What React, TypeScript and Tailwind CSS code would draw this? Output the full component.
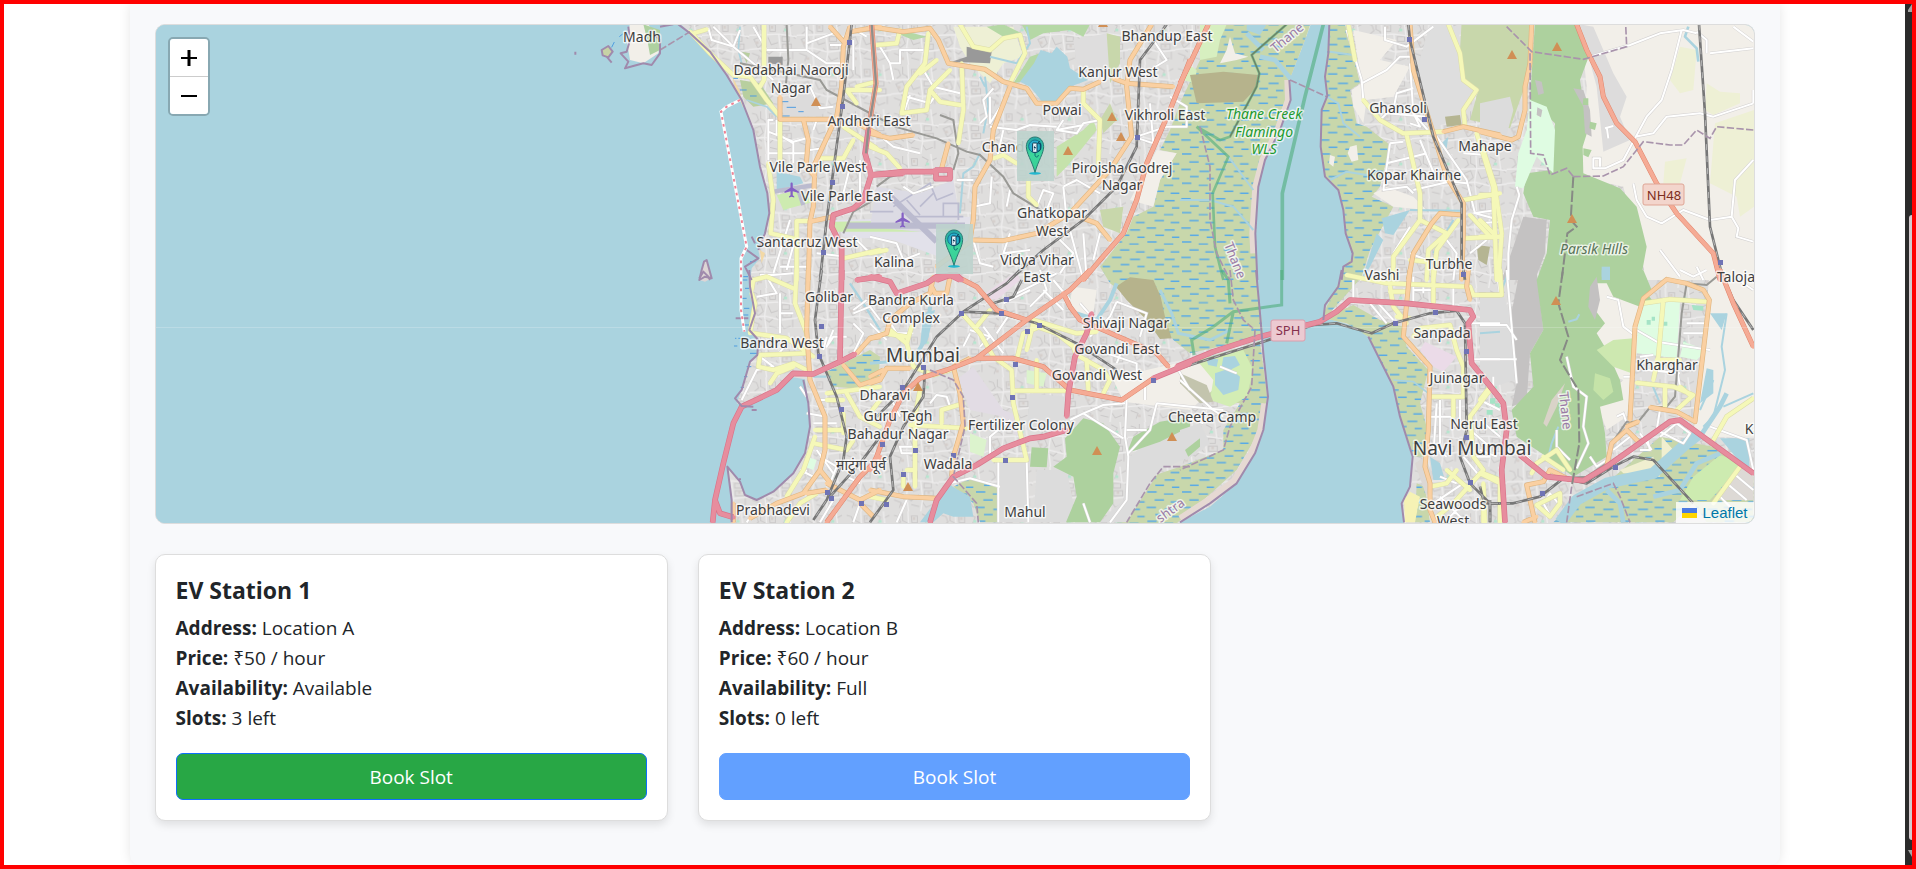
import React from "react";

/* ---------- Map data ----------
   Geometry is stored per sheet, in sheet units (3 units = 1 map pixel). */

type Sheet = "A" | "B" | "C" | "D" | "E" | "F" | "G" | "H";

const ORIGIN: Record<Sheet, [number, number]> = {
  A: [560, 20],
  B: [870, 20],
  C: [1180, 20],
  D: [1480, 20],
  E: [560, 270],
  F: [870, 270],
  G: [1180, 270],
  H: [1480, 270],
};

const place = (s: Sheet) => `translate(${ORIGIN[s][0]} ${ORIGIN[s][1]}) scale(0.33333)`;

const WEST_LAND =
  "M355 5L390 40L450 95L500 165L545 240L580 330L600 440L622 520L628 580L615 640L595 690L600 715L575 745L570 800L582 850L585 900L568 930L595 960L592 1005L570 1025L545 1110L530 1150L545 1158L580 1150L640 1110L690 1070L735 1078L745 1150L750 1220L735 1300L700 1360L640 1415L590 1440L555 1425L540 1385L502 1340L515 1450L512 1520H1850L1860 1507L1950 1460L2030 1390L2085 1300L2112 1230L2122 1130L2110 1000L2100 880L2090 780L2088 640L2095 500L2115 420L2160 330L2190 240L2188 180L2235 60L2255 5Z";
const EAST_LAND =
  "M2310 5L2305 100L2295 170L2302 228L2285 270L2282 380L2295 470L2335 510L2350 570L2357 640L2378 700L2375 725L2350 740L2335 800L2295 865L2290 900L2320 900L2370 915L2425 950L2460 1020L2500 1100L2520 1190L2555 1310L2550 1400L2525 1450L2532 1520H3600V5Z";

const WETLANDS: [Sheet, string][] = [
  ["C", "M90 0L60 120L0 250L-30 330L-60 390L-10 400L-60 480L-80 560L-140 590L-160 640L-240 740L-210 790L-60 900L-20 960L30 1000L250 950L232 780L228 640L235 500L255 420L300 330L330 240L328 180L375 60L395 0Z"],
  ["G", "M40 275L240 215L262 380L240 480L170 600L60 700L-10 760H-190L-90 620L0 590L130 540L130 480L180 400L90 390L20 310Z"],
  ["C", "M450 0H490L510 60L540 190L510 210L530 310L560 320L630 375L600 500L575 530L640 560L570 690L545 770L520 800L430 900L435 870L485 770L490 740L518 712L497 640L490 570L475 510L435 470L422 380L425 270L442 228L435 170Z"],
  ["G", "M430 145L520 105L600 150L670 170L680 230L745 300L720 400L740 470L735 560L700 560L660 440L640 350L600 270L565 200L500 160Z"],
  ["H", "M380 640L540 500L700 530L820 620V757H220L290 690Z"],
  ["E", "M800 305L850 280L930 240L960 260L955 330L880 355L820 350Z"],
  ["F", "M250 650L300 625L385 655V757H330L310 700Z"],
  ["G", "M710 640L735 650L750 757H705Z"],
];

const AREAS: [Sheet, string, string][] = [
  // open ground
  ["D", "#f2efe9", "M300 5H830V780H500L430 500L300 470L320 200Z"],
  ["H", "#f2efe9", "M330 0H500L470 250L440 440L380 480L350 400L430 330L350 300Z"],
  ["H", "#f2efe9", "M690 0H830V500L640 500Z"],
  ["C", "#f2efe9", "M520 30L650 60L600 120L690 140L640 230L560 240L550 310L520 260L515 210L545 190Z"],
  ["C", "#f2efe9", "M580 520L620 500L700 530L740 570L640 560Z"],
  ["B", "#f2efe9", "M780 540L860 390L920 400L870 480L850 560Z"],
  ["F", "#f2efe9", "M730 330L830 300L960 270L1050 290L1040 350L960 420L760 395Z"],
  ["F", "#f2efe9", "M610 50L680 60L670 130L620 140L600 90Z"],
  ["B", "#eef0d5", "M250 20H430L460 110L400 130L360 190L300 130L270 80Z"],
  ["A", "#f2efe9", "M210 10L262 10L300 60L295 100L250 130L210 120L200 60Z"],
  ["A", "#aed1a0", "M250 13L300 30V90L270 105L262 60Z"],
  // fields
  ["D", "#eef0d5", "M600 80L650 90L640 210L600 220L570 180Z"],
  ["D", "#eef0d5", "M680 190L720 215L780 220V250L700 285L675 270Z"],
  ["D", "#eef0d5", "M705 310L822 270V560L780 590L770 530L690 490Z"],
  ["D", "#eef0d5", "M555 425L620 415L600 490H550Z"],
  // built-up and industrial ground
  ["C", "#dedede", "M750 13L835 20L850 160L890 210L840 300L760 320L710 150Z"],
  ["D", "#dddcdc", "M300 13L340 20L400 160L440 230L420 290L450 360L370 395L350 200Z"],
  ["F", "#dcdcdc", "M480 370L590 380L580 470L470 480ZM390 570H470V757H390ZM500 600L590 600L610 700L590 757H490Z"],
  ["F", "#dcdcdc", "M780 560L850 500L960 470V560L870 600L770 757H690L760 690Z"],
  ["B", "#dedddd", "M610 60L710 40L720 120L660 160L620 130Z"],
  ["A", "#dcdbdb", "M670 230L740 215L800 270L780 290H670Z"],
  ["H", "#dcdcdc", "M0 75H70L110 190L105 330L40 350L0 300Z"],
  ["F", "#e2dce4", "M265 325L310 290L400 420L450 440L440 500L400 440L300 420Z"],
  ["F", "#e9dae6", "M330 80L440 5L450 30L380 90Z"],
  ["G", "#ebdbe8", "M735 215L830 260L790 305L760 290L720 240Z"],
  ["D", "#c4c2c2", "M100 680L130 590L200 600L195 700L165 780H65Z"],
  ["H", "#c4c2c2", "M120 0H170L190 180L150 250L140 390L95 410L110 340L90 150Z"],
  // hills and woods
  ["C", "#c8d7ab", "M845 5H1060L1050 160L1020 240L990 325L870 300L895 210L850 175L840 90Z"],
  ["D", "#dcdcdc", "M0 250L90 230L100 270L80 345L0 330Z"],
  ["D", "#add19e", "M165 5H290L330 100L300 180L312 260L330 310L308 380L310 460L420 505L470 560L500 680L480 790L530 860H480L400 830L380 790L350 790L330 850L375 910L350 940L380 990L420 1080L430 1140L360 1160L375 1240L380 1310L280 1370L200 1310L110 1250L95 1170L160 1100L150 1000L190 930L170 780L200 700L210 600L160 590L130 520L140 460L215 450L225 310L150 240Z"],
  ["D", "#dffce2", "M150 240L200 260L225 330L220 460L170 410L130 505L105 500L115 400L140 330Z"],
  ["D", "#c4c2c2", "M165 180L185 185L192 220L175 225ZM172 262L187 270L183 292L170 285ZM280 205L310 210L330 270L335 350L315 340L310 260Z"],
  ["D", "#add19e", "M310 235H325V255H308ZM330 305L350 310L345 330L328 325ZM310 385L335 390L325 412L310 405Z"],
  ["H", "#add19e", "M380 0H490L515 60L480 90L420 85L395 50Z"],
  ["H", "#c3c1c1", "M330 50L350 20L360 90L345 150L325 110Z"],
  ["H", "#c5e3a8", "M345 310L390 325L400 365L370 390L340 360Z"],
  ["H", "#cde8b0", "M350 240L400 210L460 205L455 310L400 290Z"],
  ["H", "#d9d3c8", "M190 460L215 390L255 340L230 410L200 470Z"],
  ["F", "#add19e", "M585 505L640 445L700 460L750 530L730 610L730 700L690 757H588L620 680L610 620L550 590L590 560ZM485 532L535 535L530 592L480 590Z"],
  ["F", "#add19e", "M790 500L870 455L960 440V470L870 515L770 550Z"],
  ["B", "#b5d8a5", "M455 13H660L640 50L600 30L520 40L480 60ZM350 20L400 13L455 40L400 50ZM480 110L510 100L480 180L430 190ZM55 30L130 40L170 50L130 60Z"],
  ["B", "#c5e2ab", "M560 380L640 330L670 300L680 330L640 380L590 440L560 470Z"],
  ["B", "#c8d7ab", "M710 40L750 50V130L720 190ZM690 300L720 250L740 300L700 340ZM690 570L760 560L750 640L700 620Z"],
  ["C", "#d7efc0", "M60 13H140L120 60L110 110L60 120ZM20 130L50 150L45 190L10 180Z"],
  ["C", "#f2efe9", "M150 50L165 100L205 110L170 120L120 130L140 90Z"],
  ["C", "#b6b38c", "M30 165L130 155L235 165L228 205L190 245L50 250Z"],
  ["F", "#b6b38c", "M738 50L780 22L850 30L872 80L885 140L905 205L870 207L830 150L770 90Z"],
  ["C", "#f2efe9", "M510 380L530 375L535 420L515 425L503 400ZM450 405L465 410L460 440L447 430Z"],
  ["C", "#b5b592", "M890 675L930 680L920 735L895 720ZM795 290L840 285L845 315L800 320Z"],
  ["G", "#d3edb4", "M50 270L190 240L220 300L200 380L150 410L90 390L100 330Z"],
  ["G", "#c3c4ad", "M0 310L80 345L100 395L60 400L0 340Z"],
  ["G", "#dcdcdc", "M0 480L60 460L90 520L20 570L0 560Z"],
  ["G", "#add19e", "M15 540L60 505L60 530L25 560Z"],
  ["G", "#dcd8d5", "M735 560L760 620L740 680L705 580Z"],
  ["G", "#f6f2b5", "M690 665L720 680L705 757H675L672 690Z"],
  ["H", "#cdebb0", "M640 620L720 555L790 580L690 690L600 690Z"],
  ["H", "#f0efd0", "M545 500L580 540L545 570ZM420 600L520 560L540 620L430 610Z"],
  ["H", "#ddd9d5", "M820 580V690H700L790 590ZM580 757L640 700L680 757Z"],
  ["H", "#dffce2", "M490 100L600 95L590 265L470 250L475 150ZM610 215L680 240L650 270L600 260Z"],
  ["H", "#a5e3c6", "M635 105L670 108V122L640 120ZM500 150h12v14h-12ZM515 140h10v12h-10ZM550 155h12v12h-12ZM30 385h16v16h-16ZM45 400h14v14h-14ZM20 420h18v14h-18Z"],
  ["E", "#dffce2", "M740 560L770 570L760 600L735 590Z"],
  ["F", "#dcf3cd", "M300 490L350 510L340 560L300 545ZM470 300L530 310L520 350L470 340Z"],
  ["A", "#b8cf9f", "M545 95L570 100L560 130ZM540 180L600 190L640 250L580 260L550 230Z"],
  ["A", "#f3d9a6", "M515 165L540 215L550 265L525 200ZM600 690L615 700L605 730Z"],
  // airports
  ["A", "#cdebb0", "M650 525L720 510L760 545L670 570Z"],
  ["A", "#e2e1ea", "M820 600L1230 590L1225 690L1150 715L1000 660L850 650Z"],
  ["A", "#cdebb0", "M820 605L1190 600V635H820Z"],
  ["B", "#dcdbe4", "M20 500L150 520L250 480L270 600L190 640L0 620Z"],
  ["B", "#999999", "M290 80L365 95L360 130L245 125L290 110Z"],
  ["A", "#999999", "M625 110H668V135L625 130Z"],
  // water
  ["A", "#aad3df", "M650 455L720 470L730 490L650 510Z"],
  ["B", "#aad3df", "M450 185L492 130L512 90L545 100L560 80L592 110L600 145L655 180L600 200L572 245L520 250L480 200Z"],
  ["C", "#aad3df", "M200 13H260L240 45L200 30ZM605 595L690 570L640 645L615 640ZM590 640L545 780L570 740L610 660ZM785 370L805 350L800 385L790 390Z"],
  ["G", "#aad3df", "M105 310L150 295L180 320L175 360L130 375L105 345ZM130 262L165 258L180 285L150 300L125 290ZM78 265L115 268L110 290L85 285ZM750 560L780 580L795 630L760 630Z"],
  ["F", "#aad3df", "M150 757L200 690L240 645L300 680L310 740L250 740L220 730L190 757Z"],
  ["F", "#aad3df", "M160 130L195 120L170 220L150 230Z"],
  ["H", "#aad3df", "M365 0H390V18L365 20ZM690 130L740 130L725 180ZM680 295L700 300L700 370L660 400ZM720 505L808 505V610Z"],
  ["D", "#aad3df", "M365 740H390V780H365Z"],
  // offshore islets
  ["A", "#ddd5d5", "M432 725L440 720L455 775L435 785L418 780L425 750Z"],
  ["A", "#c7d3a5", "M125 90L145 78L158 95L145 112L128 106Z"],
];

const CREEKS: [Sheet, number, string][] = [
  ["C", 14, "M240 110L285 120L335 180M250 90L200 40"],
  ["C", 6, "M145 410L220 510M0 540H90L160 560L220 630M440 230L475 250L490 310L540 350M450 480L500 455L560 465M450 95L520 105M690 570L840 572M820 600L760 700"],
  ["B", 6, "M470 20L480 70L440 130L360 110M345 170L355 260L340 340M330 400L310 440L280 460L270 580M330 170L345 200"],
  ["E", 7, "M870 40L910 100L960 180M760 320L800 320"],
  ["F", 12, "M180 110L170 200L130 270M740 40L720 90L680 150L620 130"],
  ["F", 9, "M870 60L905 130L925 190L1020 210L1080 180M0 280L60 275"],
  ["G", 5, "M640 330L700 335L745 370"],
  ["H", 34, "M240 757L290 690L380 640L520 610L620 520L660 490"],
  ["H", 14, "M660 500L720 410L740 370M520 680L600 660L650 580L720 550M430 757L420 700L380 660"],
  ["H", 6, "M740 130L725 230L735 300L715 380L700 440L670 470M700 330L660 420M820 370L730 410M65 60L80 20M0 190L60 185M515 340L540 400M235 470L215 520L205 560M265 155L290 148L298 133"],
  ["D", 8, "M625 20L615 50L650 85L655 125"],
  ["A", 5, "M540 20L535 90L545 130M560 240L620 260L650 290"],
];

const MINOR: [Sheet, string][] = [
  ["A", "M445 25L455 60L520 80L540 30M460 20L520 80L640 180M580 20L620 90H740V20M740 70L820 40M740 90L800 130H860M640 300H625V420M625 335L700 365L740 355M625 400H740M650 300V340L700 370V430M770 300L760 330M750 390L790 385M880 60V150M810 75H850M870 20L920 50M750 200L780 265L820 260M690 600L640 760M710 640L680 750M660 740H745M770 700L860 710M880 650L930 700M900 420V560M825 420L870 440L850 520"],
  ["B", "M30 80L60 130H90V90H160M60 130L70 180M110 230L180 250L200 220M120 225L100 280M160 150L190 200L270 220M370 205L340 240L350 290L330 310M360 230V310L410 230M360 320L440 330L480 315L560 320M400 330L380 420M365 470L360 550L310 560M420 510L410 560M560 330L620 340L640 310L690 300M580 300L560 330L640 315M580 500L620 480L690 520M580 500L590 600M500 560L520 510L550 520L530 570M310 660L330 730L370 740M420 640L400 700L480 690M640 640L650 780M600 630L640 780M560 650L610 700L570 760M690 640L670 720M0 650L80 670L100 720L150 700M800 350L890 320H950V260L900 230M840 250L850 370L790 350M850 60L890 120L840 150M20 340L70 380L150 400M100 500L130 520L190 500M260 480H310"],
  ["C", "M500 30L545 180L550 240M545 190L620 150L660 110H690M615 20V60L680 80L760 20M640 270L650 220L700 205M690 130L700 280L760 350M600 300L620 280L740 290M630 370L670 365M630 370L610 510L680 500L700 520M620 430L700 410L740 400M720 360L770 480L860 490M700 510L830 480M770 350L860 480L885 580L960 600M850 400L920 405M700 280L720 320L690 310M690 620L640 700M880 580L950 570M690 700L740 720M800 660L830 700L820 780M870 700L920 660"],
  ["D", "M330 110L450 75L540 40L610 30L650 40M690 100L820 85M605 30L575 150L545 240L500 290L465 355L430 420L375 445H340V415H360V440M465 350L520 340L560 290L660 280L700 290L820 250M820 420L765 480L755 590L690 600L610 570L545 610L500 590L470 540L460 490M755 590L775 625L770 650L820 665M650 35L680 60V100M760 20L820 65M380 320L385 355M375 325L400 318M110 500L118 525L95 600L85 700V780M0 610L60 605M540 690L600 770M650 740L670 780M820 210V250"],
  ["E", "M700 10L640 15H600M660 70V190M700 130H660M620 20L650 70L590 80M820 180L800 230L820 200H860M880 160L910 190L880 250M880 130L930 110L960 150M880 120L920 90M600 260L640 290L590 300L545 390M720 350L740 380M770 390H830M760 460H830M740 600L700 640M780 560L830 590L810 640M770 540L820 610M760 620L720 600M860 620L900 640M820 690L780 757M880 757L900 700M600 700L560 757M800 200L790 240M650 260L680 220M740 430L800 440"],
  ["F", "M385 570V757M470 570L475 757M770 390L765 500L775 560L770 690L720 757M860 400L840 480L775 550M765 400L700 405L640 430L600 450M640 430L760 505M770 480H830M860 400L1060 420M925 300L960 360M825 350V390M510 0L530 60L480 110M440 70L560 10M400 100L480 60M340 170L400 250M300 180L360 200L330 230M740 95L720 140L660 200M740 95L830 130L810 200M710 250L800 280V310M760 230L740 280M200 690L240 640L300 625L390 650M360 560V500L420 450M90 530H140V550H95ZM180 400L200 375L230 380L240 410M60 380L90 440M0 160L50 210M50 140L80 190L130 190M110 690L80 757M160 500L240 480M640 700L660 757M550 30L600 90M520 60L580 120M630 100L700 180M380 190L420 130M300 190L280 230"],
  ["G", "M520 30V100M570 100L620 160M590 95L640 150M540 30H600M700 20V100M730 70V40M820 50V120M780 390V520M750 440H820M770 400L760 560M750 520L800 560M700 60H760M870 160H960M870 268H960M0 330L100 420L130 440M840 390L840 470M870 480L930 530M880 560L930 560M760 700L850 640M780 680L850 750M830 640L780 620M860 690L800 750M900 620L850 560M940 320V370M900 390L960 420M10 440L70 460M120 290L170 310"],
  ["H", "M80 0L110 340M50 0L60 75M0 268H110M380 80L415 90L430 170L470 200M0 165L80 165L110 210M260 260L280 350L320 380L310 470L325 520L290 595M470 180L530 215L690 240M430 320H465M480 260L520 255M600 0L640 20L680 0M760 20L820 60M410 440L430 430L440 460M400 540L450 500M480 490L515 540M540 420L530 480L610 520L630 490L590 460L540 500M690 470L800 510L820 600M740 640L800 690M760 610L820 660M720 680L780 740M190 700L210 670L235 700L210 735ZM120 540L170 590M230 480V530L270 570M330 560L350 590L380 570M0 540L50 560M0 450L60 500M480 540H510L500 500M620 160H680M610 190H680M500 300L600 310M600 350L590 290"],
];

const SECONDARY: [Sheet, string][] = [
  ["A", "M390 35L450 100L520 165M612 13V180L600 200M520 165L570 170L620 240L660 290M400 40L440 28M660 300V420M625 430L640 540L632 640L700 655M860 210H960M860 210L890 250M890 200L950 185M850 320L950 385M880 360L850 415H780M750 603H710V780M850 715L960 690"],
  ["B", "M20 75L80 70L90 30M175 40L165 130L110 200L95 280L170 270L180 210L240 150M275 130L280 270L265 370M180 210L210 245L270 255M150 160L200 120M270 13L310 80L360 90L400 55L450 45L465 100L420 190M640 210L640 250L690 300L685 430M0 380L50 400L90 445M475 480V530L500 555M370 415L400 405L440 430M0 700L50 690"],
  ["C", "M505 13L525 120M550 240L600 300L670 340L790 335M680 345L720 520V600L640 710V780M805 13L840 100L850 180L890 210L850 270L855 320M850 540L960 520M890 340L940 500L950 780M720 600L800 640L745 690L740 780M835 600L770 690L760 780M855 655L960 650M870 585L930 650M690 720L740 725"],
  ["D", "M10 390L45 500L65 640L55 780M0 525H45M0 650H65M0 600L40 640"],
  ["E", "M575 60L580 30L620 20L700 55M575 70L585 100L570 190M710 0L705 100L740 190L740 250L600 255L595 290L640 300L700 280L740 300M580 190L680 205L760 260M630 340L650 310L700 290M765 480H850M760 520L860 540L880 510M765 500L730 600L680 680M800 370L880 360L960 350M800 390H850M860 370L900 440L960 470M850 430V490M680 757L720 700L770 670"],
  ["F", "M280 135L330 190L370 260L425 300L430 400L470 570H370M430 362H590M500 362V270M510 170L460 190L440 270M470 240L490 160M490 150L620 190L680 185M500 170L560 190L610 230L620 260M360 120L320 170M60 180L110 220L125 170M40 190L110 200M110 220L130 290L190 315L240 300M280 400L215 420V460M120 465L290 475M150 360L135 440V650M650 270L655 360M630 260L700 300L720 330L700 370M0 430L30 390M100 610V650M0 680L50 690M110 600H130"],
  ["G", "M500 15L620 40L870 50L880 75H960M630 50L640 110L680 160M630 65H680M760 0V100M700 200L720 175L810 165L830 240L850 290V380H750M820 380V440M930 360L870 440L880 560L910 600L820 700L760 750M800 600L870 660M750 650L800 640L830 600M910 610L960 630V757M650 140L690 145M910 640L915 757"],
  ["H", "M490 100L570 88L680 95M550 90L535 260L520 330M470 338L580 350L640 375L590 420M555 350V410M600 350L630 375M820 385L740 440L700 510M780 590L700 700M60 0L65 75H0M0 610L60 640M155 610L170 580L230 540L270 600M190 560L250 600M170 705L240 670V700L210 740ZM0 390L30 350M10 650V757M530 270H600"],
];

const PRIMARY: [Sheet, string][] = [
  ["A", "M660 230V298H730L745 360L738 440L765 470M870 20L850 80L845 200L830 290L765 430L760 560L750 605L745 780M750 605L820 590M810 20L855 70M870 35L960 20M660 298H810M890 310L960 345"],
  ["B", "M0 20L100 35L180 25L205 60L235 130L345 148L400 185L470 205L500 250L560 250L600 205L640 208L690 185M730 175L770 190L910 200M845 13L780 120L770 200L785 350L720 450L600 580L500 640L400 662L310 660M300 665L200 740M420 200L370 330L360 420L315 500L310 600L300 660M235 370L215 445M0 340L60 355L130 345M600 580L680 610L720 660"],
  ["C", "M690 13L700 150L760 340L800 470L850 550V640L845 780M850 585L780 580L755 610L700 700L685 780M790 335L850 320L960 345"],
  ["D", "M155 13L150 130L135 200V270L115 350L95 360L0 335"],
  ["E", "M745 0L740 180L750 330L795 440V540L780 600L730 670L650 700L570 745M850 285L900 345L960 325M960 200L930 205L890 250M800 640L900 690L960 660M780 600L820 650M740 670L800 660M520 700V757M900 700L940 740"],
  ["F", "M0 205L50 190L60 150L120 100L180 70L190 20M180 40L195 70L230 70L240 20M250 290L270 370L280 460L250 560L245 620M0 340L30 330L50 295L120 295M0 660L100 680L200 685M250 290L300 265M0 320L40 300"],
  ["G", "M690 0L680 100L670 200L750 290L745 480L735 590L750 640L750 720L765 757M865 0L860 50L870 90"],
  ["H", "M450 450L465 170L490 85L560 28L620 40L670 60L688 90L645 455L590 425L510 412M440 480L480 520M380 590L395 520L440 480M165 757L140 645L190 635L210 600L270 630M440 470L475 455M130 757L170 740"],
];

const TRUNK: [Sheet, string][] = [
  ["A", "M935 13L948 190L925 330"],
  ["B", "M960 120L900 270L830 430L800 540L760 640L690 720L640 780"],
  ["C", "M85 13L30 130L0 190"],
  ["D", "M290 13L320 90L360 170L370 230L410 310L465 365L530 490L590 580L700 700L720 780"],
  ["E", "M960 560L900 620L800 757"],
  ["F", "M270 25L320 50L380 120L470 150M660 0L600 60L470 150L320 265L230 300L150 325L100 370L60 450L20 560L0 600M320 265H430L520 290L600 360L755 390L850 325M580 70L600 110L630 150L700 180L860 250L895 290"],
  ["H", "M720 0L760 100L820 230"],
];

const MOTORWAY: [Sheet, string][] = [
  ["A", "M925 330L915 400L935 470M935 460L910 540L880 565L820 585L815 620L845 680V780M930 465L1030 460"],
  ["B", "M0 465L100 455H200M195 450H240V476H198V450M200 780L240 765L270 780"],
  ["E", "M845 0L840 270M885 252L840 275L760 312L700 310L650 360L545 410L520 460L490 580L465 690L480 730L520 742M465 690L458 757M890 30L960 20"],
  ["F", "M0 20L60 35L80 70L170 40L200 20L260 15L275 30M665 130L650 190L615 260L595 370L590 440M590 480L520 500L480 505L400 535L320 585L250 620L200 690L180 757M960 280L850 325"],
  ["G", "M-10 290L100 245L240 200L420 155L470 125L510 90L680 100L870 120L880 140L865 160L875 280L960 385"],
  ["H", "M0 310L70 400L80 480L65 600L75 757M120 555L200 620L310 632L380 590L570 455L600 450L820 610"],
];

const RAIL: [Sheet, string][] = [
  ["A", "M875 13L850 230L800 600L780 780"],
  ["B", "M890 13L810 120L800 380L740 500L640 600L520 690L420 780"],
  ["C", "M685 13L690 60L760 350L845 550V720L855 780"],
  ["D", "M657 13L675 280L690 620L730 780"],
  ["E", "M785 0L765 150L775 250L830 380L860 500L850 570L800 690L760 750M960 500L900 580L810 680"],
  ["F", "M450 0L410 40L280 125L200 200L150 280L100 360L20 440M280 125L390 130L500 160L620 220L740 300M165 300L160 380L100 470L60 560L70 660L0 757M455 30L430 80L370 100"],
  ["G", "M0 295L250 215L400 165L470 160L520 175L575 190L640 160L750 130L830 122L855 160L860 480L840 560L870 640L930 700H960M930 700V757M910 690L900 650"],
  ["H", "M0 700L100 700L180 680L250 625L320 640L400 590L460 560L520 570L640 700M720 0L760 90L820 180M30 690V757"],
];

const METRO: [Sheet, string][] = [
  ["A", "M680 13L685 120L678 190M540 130L640 150L780 180L800 210L940 285M935 13L948 190L925 330M960 530L880 575L850 640"],
  ["B", "M10 285L75 320L200 355L290 395L330 405L400 470L430 520L520 575M210 285L250 300L265 400L250 450M20 500L60 470L120 455"],
  ["H", "M710 20L680 45L620 40L605 130L585 380L560 410L510 412L475 455L440 455L395 520L380 580L320 620L240 625"],
];

const BORDERS: [Sheet, string][] = [
  ["C", "M60 320L90 440V600L110 700L150 780M330 180L440 230"],
  ["G", "M150 0L160 90L190 150L225 180L215 350L150 470L130 540L0 600"],
  ["F", "M960 590L880 590L840 640L770 757M180 300L250 330L280 380L285 470L250 620L320 700L325 757"],
  ["D", "M80 20L155 95L310 118L440 80L437 13M280 470L370 468L430 440L490 365L570 375L610 375L650 330L690 355L710 320L820 330M150 100L152 400L190 405L210 465L260 445L280 470"],
  ["H", "M275 650L260 757M290 680L400 640L420 680L450 757"],
  ["A", "M300 90L390 35"],
];

const HILL_TRACK: [Sheet, string][] = [
  ["D", "M280 470L272 600L290 620L262 640L245 780"],
  ["H", "M248 5L235 100L265 200L240 270L295 360L298 520L275 650"],
];

const COAST: [Sheet, string][] = [
  ["A", "M355 13L390 40L450 95L500 165L545 240L580 330L600 440L622 520L628 580L615 640L595 690M575 650L585 670M560 690L595 715L555 740L575 780M205 20L210 60L200 95L182 100L205 125L195 145L250 130L275 135L300 100L300 60L270 30M125 90L145 78L158 95L145 112L128 106ZM140 110L155 128M46 95V104M300 20L340 13M432 725L440 720L455 775L435 770L418 780L425 750Z"],
  ["E", "M568 0L570 50L585 130L568 180L595 210L592 255L570 275L545 360L525 385L545 408L580 410M527 145H565M730 330L745 400L750 470L735 550L700 610L640 665L590 690L555 675L540 635L502 590L515 690V757M540 625V630M575 420H590M418 25L430 5L445 20L450 30"],
  ["C", "M328 180L332 240L300 330L255 420L235 500L226 640L232 780M448 13L445 100L435 170L442 228L425 270L422 380L435 470L475 510L490 570L497 640L518 700L515 725L490 740L485 780"],
  ["G", "M228 0L240 130L250 250L264 380L250 480L225 550L170 640L90 700L0 757M485 0L475 50L435 105L430 150M565 200L600 270L640 350L660 440L698 560L690 650L665 700L672 757"],
];

const GREENWAYS: [Sheet, number, string][] = [
  ["C", 11, "M430 13L375 230L307 520V780"],
  ["G", 9, "M305 0V105L160 125L100 170L35 210L42 255M160 125L140 220M125 0L145 30L150 100"],
  ["C", 8, "M320 13L215 105L238 160L230 200L150 350L120 360L50 320L145 410L98 520L105 680L130 780"],
];

type Label = [string, number, number];

const PLACES: Label[] = [
  ["Madh", 642, 42],
  ["Dadabhai Naoroji", 791, 75],
  ["Nagar", 791, 93],
  ["Andheri East", 869, 126],
  ["Vile Parle West", 818, 172],
  ["Vile Parle East", 847, 201],
  ["Santacruz West", 807, 247],
  ["Kalina", 894, 267],
  ["Golibar", 829, 302],
  ["Bandra Kurla", 911, 305],
  ["Complex", 911, 323],
  ["Bandra West", 782, 348],
  ["Dharavi", 885, 400],
  ["Guru Tegh", 898, 421],
  ["Bahadur Nagar", 898, 439],
  ["माटुंगा पूर्व", 861, 470],
  ["Prabhadevi", 773, 515],
  ["Wadala", 948, 469],
  ["Fertilizer Colony", 1021, 430],
  ["Mahul", 1025, 517],
  ["Govandi West", 1097, 380],
  ["Govandi East", 1117, 354],
  ["Shivaji Nagar", 1126, 328],
  ["Vidya Vihar", 1037, 265],
  ["East", 1037, 282],
  ["Ghatkopar", 1052, 218],
  ["West", 1052, 236],
  ["Chand", 1003, 152],
  ["Powai", 1062, 115],
  ["Kanjur West", 1118, 77],
  ["Bhandup East", 1167, 41],
  ["Vikhroli East", 1165, 120],
  ["Pirojsha Godrej", 1122, 173],
  ["Nagar", 1122, 190],
  ["Cheeta Camp", 1212, 422],
  ["Ghansoli", 1398, 113],
  ["Mahape", 1485, 151],
  ["Kopar Khairne", 1414, 180],
  ["Turbhe", 1449, 269],
  ["Vashi", 1382, 280],
  ["Sanpada", 1442, 338],
  ["Juinagar", 1457, 383],
  ["Nerul East", 1484, 429],
  ["Seawoods", 1453, 509],
  ["West", 1453, 526],
  ["Kharghar", 1667, 370],
  ["Taloja", 1736, 282],
  ["Ka", 1753, 434],
];

const PEAKS: [number, number][] = [
  [816, 102], [1103, 23], [1112, 117], [1121, 137], [1068, 151], [1097, 451], [1172, 437],
  [908, 487], [918, 387], [1512, 55], [1557, 47], [1572, 219], [1556, 301],
];

const STATIONS: [number, number][] = [
  [849, 42], [842, 106], [832, 182], [823, 252], [821, 326], [819, 356], [841, 409], [827, 492],
  [831, 498], [861, 503], [961, 313], [1006, 299], [1001, 313], [1039, 325], [1027, 331],
  [1015, 364], [1012, 397], [923, 367], [902, 387], [882, 444], [915, 450], [953, 455],
  [1005, 460], [903, 474], [886, 504], [1153, 380], [1137, 137], [1409, 39], [1424, 119],
  [1463, 274], [1395, 323], [1435, 312], [1466, 351], [1466, 437], [1470, 482], [1720, 262],
  [1615, 467], [1542, 493],
];

const PLANES: [number, number][] = [
  [783, 181],
  [894, 211],
];

function Lines({ data, className }: { data: [Sheet, string][]; className: string }) {
  return (
    <g className={className}>
      {data.map(([s, d], i) => (
        <path key={i} d={d} transform={place(s)} />
      ))}
    </g>
  );
}

function CityMap() {
  return (
    <svg
      viewBox="156 25 1598 498"
      preserveAspectRatio="xMidYMid slice"
      className="absolute inset-0 h-full w-full"
      role="img"
      aria-label="Map of Mumbai and Navi Mumbai"
    >
      <defs>
        <pattern id="marsh" width="104" height="88" patternUnits="userSpaceOnUse">
          <rect width="104" height="88" fill="#c8d7ab" />
          <path
            d="M4 8h28M58 14h30M30 30h26M80 36h22M6 50h28M56 56h28M28 74h28M76 80h26"
            stroke="#56a9e8"
            strokeWidth="4"
          />
        </pattern>
        <pattern id="blocks" width="142" height="134" patternUnits="userSpaceOnUse">
          <path
            d="M8 12l14 4 6 16-12 10M34 6v22l16 8M60 14h18v20H62zM92 8l18 10-8 18M120 20l16-8M14 58l20-8 8 20-16 14zM56 52l10 22 20-6M98 50h22v14H98zM100 72h26v16h-26zM8 100l22 8-6 16M44 92l16 10 14-12M60 114l24 6M92 104l12 18 20-8M130 94v24M128 44l10 12M44 34l10 10M80 84l10 12M30 90l8 6"
            fill="none"
            stroke="#cac8c8"
            strokeWidth="3"
          />
          <path
            d="M0 46L52 44L88 42L142 50M50 0L52 44L46 84L52 134M88 42L94 96L88 134M0 88L46 84L94 96L142 90M118 0L124 48"
            fill="none"
            stroke="#eeeded"
            strokeWidth="4"
          />
          <path d="M64 18h8v8h-8zM108 74h8v8h-8zM18 64h10v8h-10zM30 112h8v8h-8z" fill="#d5cfcc" />
          <path d="M104 26h9v8h-9z" fill="#b5e6cf" />
        </pattern>
        <linearGradient id="pin" x1="0" y1="0" x2="0" y2="1">
          <stop offset="0" stopColor="#27a6a8" />
          <stop offset="0.5" stopColor="#3dd69b" />
          <stop offset="1" stopColor="#36cf96" />
        </linearGradient>
      </defs>

      <rect x="156" y="25" width="1598" height="498" fill="#aad3df" />
      <g transform={place("A")}>
        <path d={WEST_LAND} fill="#dfdedd" />
        <path d={EAST_LAND} fill="#dfdedd" />
        <path d={WEST_LAND} fill="url(#blocks)" />
        <path d={EAST_LAND} fill="url(#blocks)" />
      </g>
      {WETLANDS.map(([s, d], i) => (
        <path key={i} d={d} transform={place(s)} fill="url(#marsh)" />
      ))}
      {AREAS.map(([s, fill, d], i) => (
        <path key={i} d={d} transform={place(s)} fill={fill} />
      ))}
      <g fill="none" stroke="#e6d9d3" strokeWidth="18">
        <path transform={place("C")} d="M322 180L324 240L292 330L247 420L226 500L217 640L220 700" />
        <path transform={place("G")} d="M253 400L241 480L216 545L162 632L84 690L0 745" />
      </g>
      <g fill="none" stroke="#aad3df" strokeLinejoin="round">
        {CREEKS.map(([s, w, d], i) => (
          <path key={i} d={d} transform={place(s)} strokeWidth={w} />
        ))}
      </g>
      <g fill="none" stroke="#4f9de0" strokeWidth="3">
        <path
          transform={place("A")}
          d="M520 175h14M540 210h20M570 228h20M665 245h20M680 262h28M665 288h24M715 275h16M155 82l8-16M178 50l10-8M570 725h16M550 770h14"
        />
        <path
          transform={place("E")}
          d="M548 30h14M555 55h16M540 85h20M552 115h16M545 135h20M555 165h14M525 205h4M535 205h8M522 228h10M570 250h22M560 290h14M552 320h10M542 352h10"
        />
      </g>

      <g fill="none" stroke="#bbbbcf">
        <path transform={place("A")} d="M640 515L765 495M715 510L730 555" strokeWidth="13" />
        <path transform={place("A")} d="M860 617H1215" strokeWidth="19" />
        <path transform={place("B")} d="M62 530L200 665" strokeWidth="18" />
        <path
          transform={place("B")}
          d="M70 560L180 490L200 540L250 520M130 590H280M220 590V550H265V600M150 560L190 520M0 575H70M110 540L150 585"
          strokeWidth="5"
        />
      </g>

      <Lines data={MINOR} className="fill-none stroke-[#d3d1d1] stroke-[9px]" />
      <Lines data={MINOR} className="fill-none stroke-white stroke-[6px] [stroke-linejoin:round]" />
      <Lines data={METRO} className="fill-none stroke-[#999995] stroke-[6px]" />
      <Lines data={SECONDARY} className="fill-none stroke-[#dcdcaa] stroke-[15px] [stroke-linejoin:round]" />
      <Lines data={SECONDARY} className="fill-none stroke-[#f5f8b8] stroke-[12px] [stroke-linecap:round] [stroke-linejoin:round]" />
      <Lines data={PRIMARY} className="fill-none stroke-[#e0b680] stroke-[15px] [stroke-linejoin:round]" />
      <Lines data={PRIMARY} className="fill-none stroke-[#fad0a2] stroke-[11px] [stroke-linecap:round] [stroke-linejoin:round]" />
      <Lines data={RAIL} className="fill-none stroke-[#777777] stroke-[8px] [stroke-linejoin:round]" />
      <Lines data={RAIL} className="fill-none stroke-[#b5b5b5] stroke-[3px] [stroke-dasharray:18_18]" />
      <Lines data={TRUNK} className="fill-none stroke-[#e0856c] stroke-[15px] [stroke-linejoin:round]" />
      <Lines data={TRUNK} className="fill-none stroke-[#f5ab95] stroke-[12px] [stroke-linecap:round] [stroke-linejoin:round]" />
      <Lines data={MOTORWAY} className="fill-none stroke-[#d9748a] stroke-[17px] [stroke-linejoin:round]" />
      <Lines data={MOTORWAY} className="fill-none stroke-[#e78d9e] stroke-[13px] [stroke-linecap:round] [stroke-linejoin:round]" />
      <path
        transform={place("A")}
        d="M935 13L948 190L925 330L918 400"
        className="fill-none stroke-[#8f8f8b] stroke-[7px]"
      />

      <g fill="none" stroke="#4fae7c" strokeOpacity="0.6">
        {GREENWAYS.map(([s, w, d], i) => (
          <path key={i} d={d} transform={place(s)} strokeWidth={w} />
        ))}
      </g>
      <path
        transform={place("C")}
        d="M320 13L215 105L238 160L230 200L150 350"
        className="fill-none stroke-[#6f8066] stroke-[4px]"
      />
      <Lines data={HILL_TRACK} className="fill-none stroke-[#878a85] stroke-[6px] [stroke-dasharray:34_8]" />
      <Lines data={BORDERS} className="fill-none stroke-[#a994ac] stroke-[5px] [stroke-dasharray:22_7]" />
      <Lines data={COAST} className="fill-none stroke-[#a08aac] stroke-[6px] [stroke-linejoin:round]" />

      <g transform={place("A")} fill="none">
        <path d="M540 240L500 260L483 275L560 680L543 715V870L553 935" stroke="#ffffff" strokeWidth="9" />
        <path
          d="M540 240L500 260L483 275L560 680L543 715V870L553 935"
          stroke="#ee8294"
          strokeWidth="6"
          strokeDasharray="8 13"
        />
      </g>

      <path d="M156 327.500H1754" stroke="#ffffff" strokeOpacity="0.2" />

      <g fill="#6f73b5">
        {STATIONS.map(([x, y], i) => (
          <rect key={i} x={x - 2} y={y - 2} width="5" height="5" />
        ))}
      </g>
      <g fill="#d08f55">
        {PEAKS.map(([x, y], i) => (
          <path key={i} d={`M${x - 5} ${y + 4}L${x} ${y - 5}L${x + 5} ${y + 4}Z`} />
        ))}
      </g>
      <g fill="#8461c4">
        {PLANES.map(([x, y], i) => (
          <path
            key={i}
            transform={`translate(${x} ${y}) scale(0.75)`}
            d="M21 16v-2l-8-5V3.500c0-.83-.67-1.500-1.500-1.500S10 2.670 10 3.500V9l-8 5v2l8-2.500V19l-2 1.500V22l3.500-1 3.500 1v-1.500L13 19v-5.500l8 2.500z"
          />
        ))}
      </g>

      <g
        textAnchor="middle"
        className="fill-[#3f3f3f] stroke-white/70 stroke-[3px] font-['Noto_Sans','Open_Sans',sans-serif] text-[14px] [paint-order:stroke] [stroke-linejoin:round]"
      >
        {PLACES.map(([t, x, y], i) => (
          <text key={i} x={x} y={y}>
            {t}
          </text>
        ))}
        <g className="text-[19px]">
          <text x="923" y="362">Mumbai</text>
          <text x="1472" y="455">Navi Mumbai</text>
        </g>
        <g className="fill-[#1f9a30] italic">
          <text x="1264" y="119">Thane Creek</text>
          <text x="1264" y="137">Flamingo</text>
          <text x="1264" y="154">WLS</text>
        </g>
        <text x="1594" y="254" className="fill-[#5a7459] italic">Parsik Hills</text>
        <g className="fill-[#9a7aa6] text-[13px]">
          <text transform="translate(1290 41) rotate(-40)">Thane</text>
          <text transform="translate(1231 262) rotate(68)">Thane</text>
          <text transform="translate(1561 411) rotate(84)">Thane</text>
          <text transform="translate(1173 514) rotate(-36)">shtra</text>
        </g>
      </g>

      <g textAnchor="middle" className="font-['Noto_Sans','Open_Sans',sans-serif] text-[13px]">
        <rect x="1271" y="320" width="34" height="21" rx="2" fill="#eccad1" stroke="#dc9dac" />
        <text x="1288" y="335" fill="#85304d">SPH</text>
        <rect x="1643" y="184" width="41" height="21" rx="2" fill="#f3d5cc" stroke="#dfa595" />
        <text x="1664" y="200" fill="#7c2d20">NH48</text>
      </g>
    </svg>
  );
}

function StationMarker({ label, position }: { label: string; position: string }) {
  return (
    <button type="button" aria-label={label} className={`absolute h-[50px] w-[37px] bg-[#bed3cd]/90 ${position}`}>
      <svg viewBox="0 0 111 150" className="h-full w-full" aria-hidden="true">
        <ellipse cx="54" cy="127" rx="18" ry="4" fill="#23b7cf" />
        <path
          d="M54 18C38 18 28 31 28 47C28 67 44 88 54 124C64 88 80 67 80 47C80 31 70 18 54 18Z"
          fill="url(#pin)"
          stroke="#2a7a72"
          strokeWidth="3"
        />
        <circle cx="54" cy="46" r="19" fill="#27aecb" stroke="#14708a" strokeWidth="3" />
        <rect x="47" y="36" width="13" height="28" rx="2" fill="#eefaff" stroke="#0b3b55" strokeWidth="3" />
        <path d="M55 41L50 51H53L52 59L57 48H54Z" fill="#0b3b55" />
        <path d="M61 38L68 30M64 38H70V54C70 58 66 61 62 60" fill="none" stroke="#0b3b55" strokeWidth="3" />
        <path d="M54 66V72C54 80 64 80 64 72" fill="none" stroke="#0d6b73" strokeWidth="3" />
      </svg>
    </button>
  );
}

function StationMap() {
  return (
    <section
      aria-label="Station map"
      className="relative h-[500px] overflow-hidden rounded-[10px] border border-[#dddddd] bg-[#aad3df]"
    >
      <CityMap />
      <StationMarker label="EV Station 2" position="left-[861px] top-[106px]" />
      <StationMarker label="EV Station 1" position="left-[780px] top-[199px]" />
      <div className="absolute left-3 top-3 flex w-[42px] flex-col overflow-hidden rounded-[5px] border-2 border-black/20 bg-clip-padding">
        <button
          type="button"
          aria-label="Zoom in"
          className="flex h-[38px] items-center justify-center border-b border-[#cccccc] bg-white"
        >
          <svg viewBox="0 0 16 16" className="size-4" aria-hidden="true">
            <path d="M0 8H16" stroke="#000000" strokeWidth="2" />
            <path d="M8 0V16" stroke="#000000" strokeWidth="3" />
          </svg>
        </button>
        <button type="button" aria-label="Zoom out" className="flex h-[37px] items-center justify-center bg-white">
          <svg viewBox="0 0 16 16" className="size-4" aria-hidden="true">
            <path d="M0 8H16" stroke="#000000" strokeWidth="2" />
          </svg>
        </button>
      </div>
      <div className="absolute bottom-0 right-0 flex h-[21px] items-center gap-[5px] bg-white/80 px-[6px]">
        <svg viewBox="0 0 15 10" className="h-[10px] w-[15px]" aria-hidden="true">
          <path d="M0 0H15V5H0Z" fill="#4C7BE1" />
          <path d="M0 5H15V10H0Z" fill="#FFD500" />
        </svg>
        <a href="#leaflet" className="font-['Liberation_Sans',Arial,sans-serif] text-[15px] leading-5 text-[#0078a8]">
          Leaflet
        </a>
      </div>
    </section>
  );
}

type Station = {
  name: string;
  address: string;
  price: number;
  availability: string;
  slots: number;
};

const STATION_LIST: Station[] = [
  { name: "EV Station 1", address: "Location A", price: 50, availability: "Available", slots: 3 },
  { name: "EV Station 2", address: "Location B", price: 60, availability: "Full", slots: 0 },
];

function StationCard({ station }: { station: Station }) {
  const open = station.slots > 0;
  return (
    <article className="rounded-[10px] border border-[#dddddd] bg-white p-5 shadow-[0_4px_8px_rgba(0,0,0,0.1)]">
      <h2 className="mb-2 text-[23px] font-bold leading-[30px]">{station.name}</h2>
      <p>
        <strong className="font-bold">Address:</strong> {station.address}
      </p>
      <p>
        <strong className="font-bold">Price:</strong> ₹{station.price} / hour
      </p>
      <p>
        <strong className="font-bold">Availability:</strong> {station.availability}
      </p>
      <p>
        <strong className="font-bold">Slots:</strong> {station.slots} left
      </p>
      <button
        type="button"
        disabled={!open}
        className={
          open
            ? "mt-5 h-[47px] w-full rounded-[7px] border border-[#0d6efd] bg-[#28a745] text-white"
            : "mt-5 h-[47px] w-full rounded-[7px] border border-[#62a0ff] bg-[#62a0ff] text-white"
        }
      >
        Book Slot
      </button>
    </article>
  );
}

export default function App() {
  return (
    <div className="flex min-h-screen border-4 border-[#ff0000] bg-white font-['Open_Sans','Noto_Sans',sans-serif] text-[19px] leading-[30px] text-[#212529]">
      <div className="flex min-w-0 flex-1 justify-center overflow-hidden">
        <main className="w-full max-w-[1650px] rounded-b-[10px] bg-[#f8f9fb] px-[25px] pb-11 pt-5 shadow-[0_0_12px_rgba(0,0,0,0.1)]">
          <StationMap />
          <div className="mt-[30px] grid grid-cols-3 gap-[30px]">
            {STATION_LIST.map((s) => (
              <StationCard key={s.name} station={s} />
            ))}
          </div>
        </main>
      </div>
      <div aria-hidden="true" className="flex w-[7px] flex-col items-end overflow-hidden bg-[#2b2b2b]">
        <svg viewBox="0 0 4 8" className="h-2 w-1">
          <path d="M4 0V8H0V6Z" fill="#a5a5a5" />
        </svg>
        <div className="mt-[203px] w-[3px] flex-1 rounded-l-[3px] bg-[#d3cace]" />
        <svg viewBox="0 0 4 8" className="mb-2 mt-[9px] h-2 w-1">
          <path d="M0 1H4V8Z" fill="#a5a5a5" />
        </svg>
      </div>
    </div>
  );
}
